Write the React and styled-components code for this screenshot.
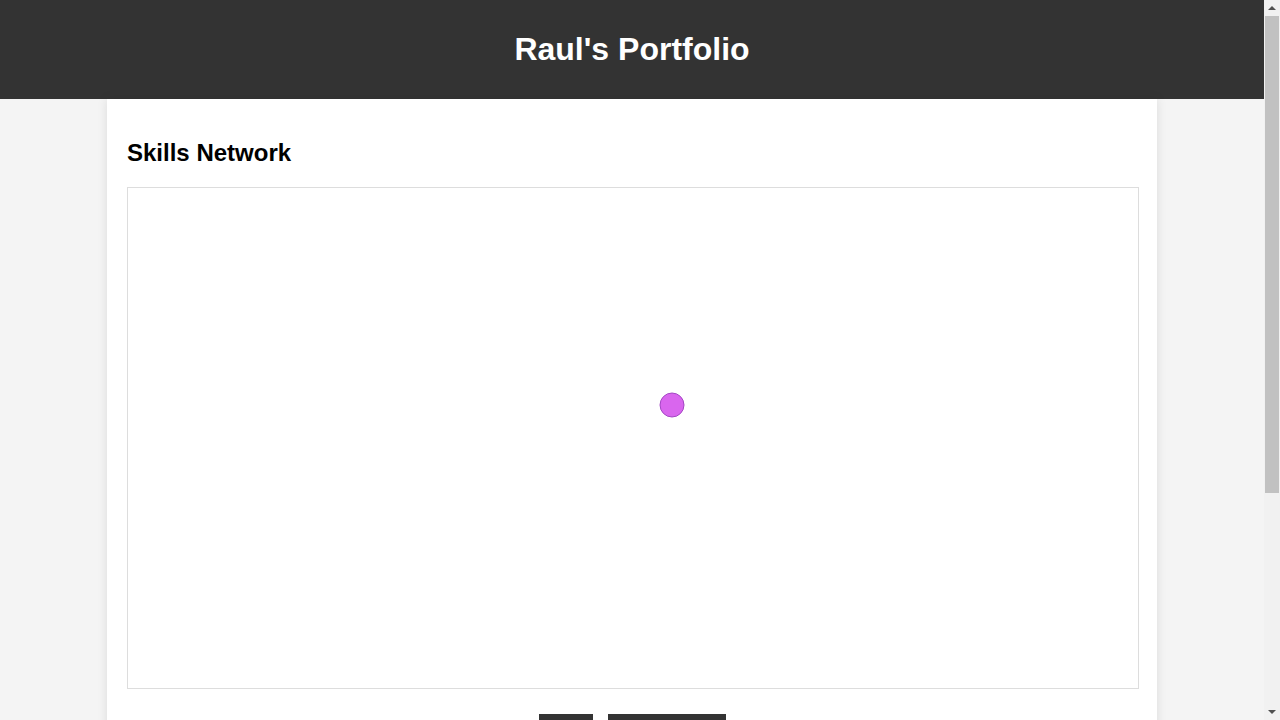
import styled, { createGlobalStyle } from 'styled-components'

const GlobalStyle = createGlobalStyle`
html::-webkit-scrollbar {
  display: none;
}

body {
  margin: 0 16px 0 0;
  background: #f4f4f4;
  font-family: "Liberation Sans", Arial, sans-serif;
  color: #000;
}
`

const Header = styled.header`
  background: #333;
  color: white;
  height: 99px;
  display: flex;
  align-items: center;
  justify-content: center;

  h1 {
    margin: 0;
    font-size: 32px;
    line-height: 37px;
  }
`

const Container = styled.main`
  width: 1010px;
  margin: 0 auto;
  padding: 20px;
  background: white;
  box-shadow: 0 0 10px rgba(0, 0, 0, 0.1);
`

const Title = styled.h2`
  margin: 20px 0;
  font-size: 24px;
  line-height: 28px;
`

const Graph = styled.svg`
  display: block;
  width: 1010px;
  height: 500px;
  border: 1px solid #ddd;
`

const Controls = styled.div`
  display: flex;
  justify-content: center;
  gap: 15px;
  margin-top: 25px;
`

const Button = styled.button`
  width: ${({ $w }) => $w}px;
  height: 36px;
  border: none;
  background: #333;
  color: white;
  font-family: inherit;
  font-size: 14px;
  cursor: pointer;
`

const Section = styled.section`
  margin-top: 40px;
  min-height: 230px;

  p {
    font-size: 16px;
    line-height: 1.5;
    color: #444;
  }
`

/* stand-in for the classic browser scrollbar seen in the screenshot */
const Scrollbar = styled.div`
  position: fixed;
  top: 0;
  right: 0;
  width: 16px;
  height: 100vh;
  background: #f1f1f1;
  display: flex;
  flex-direction: column;
`

const Arrow = styled.div`
  height: 16px;
  display: flex;
  align-items: center;
  justify-content: center;
  flex-shrink: 0;

  &::after {
    content: '';
    border-left: 4px solid transparent;
    border-right: 4px solid transparent;
    ${({ $down }) => ($down ? 'border-top: 4px solid #505050;' : 'border-bottom: 4px solid #505050;')}
  }
`

const Track = styled.div`
  flex: 1;
  padding: 0 1px 0 1px;
`

const Thumb = styled.div`
  height: 477px;
  background: #c1c1c1;
`

const App = () => (
  <>
    <GlobalStyle />
    <Header>
      <h1>Raul's Portfolio</h1>
    </Header>
    <Container>
      <Title>Skills Network</Title>
      <Graph viewBox="0 0 1010 500">
        <circle cx="544" cy="217" r="12" fill="#d966ee" stroke="#a447c4" strokeWidth="1" />
      </Graph>
      <Controls>
        <Button $w={54}>All</Button>
        <Button $w={118}>Reset Zoom</Button>
      </Controls>
      <Section>
        <Title>About</Title>
        <p>Drag the nodes to explore how the skills connect.</p>
      </Section>
    </Container>
    <Scrollbar aria-hidden="true">
      <Arrow />
      <Track>
        <Thumb />
      </Track>
      <Arrow $down />
    </Scrollbar>
  </>
)

export default App
